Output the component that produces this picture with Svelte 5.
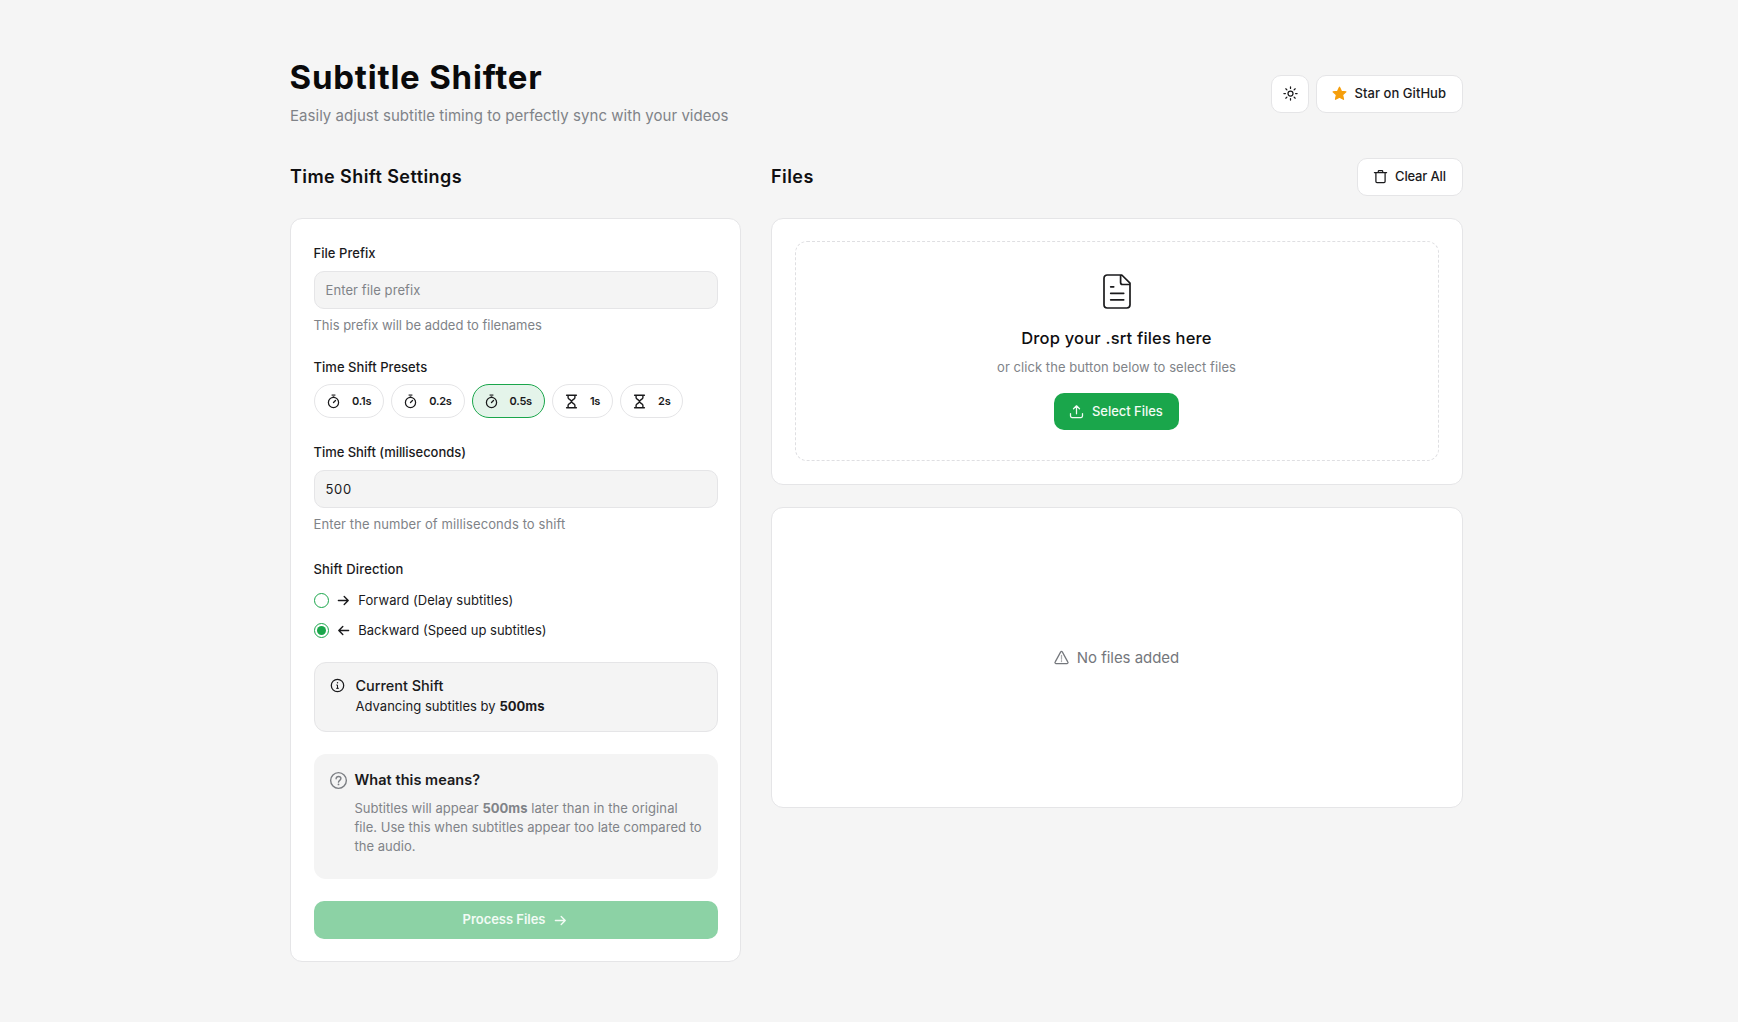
<script>
  let presets = [
    { label: '0.1s', ms: 100, icon: 'stopwatch' },
    { label: '0.2s', ms: 200, icon: 'stopwatch' },
    { label: '0.5s', ms: 500, icon: 'stopwatch' },
    { label: '1s', ms: 1000, icon: 'hourglass' },
    { label: '2s', ms: 2000, icon: 'hourglass' }
  ];
  let shift = $state(500);
  let prefix = $state('');
  let direction = $state('backward');
</script>

{#snippet arrow(back)}
  <svg class="icon arrow" class:back viewBox="0 0 15 15"><path d="M2.4 7.5h9.8M8.2 3.5l4 4-4 4" /></svg>
{/snippet}

<div class="page">
  <header>
    <div>
      <h1>Subtitle Shifter</h1>
      <p class="tagline">Easily adjust subtitle timing to perfectly sync with your videos</p>
    </div>
    <div class="actions">
      <button class="btn square" aria-label="Toggle theme">
        <svg class="icon" viewBox="0 0 15 15"><circle cx="7.5" cy="7.5" r="2.5" /><path d="M7.5.9v1.5M7.5 12.6v1.5M.9 7.5h1.5M12.6 7.5h1.5M2.8 2.8l1.1 1.1M11.1 11.1l1.1 1.1M2.8 12.2l1.1-1.1M11.1 3.9l1.1-1.1" /></svg>
      </button>
      <button class="btn star">
        <svg class="icon gold" viewBox="0 0 15 15"><path d="M7.5 1.2 9.4 5.3l4.5.5-3.3 3 .9 4.5-4-2.2-4 2.2.9-4.5-3.3-3 4.5-.5z" /></svg>
        <span>Star on GitHub</span>
      </button>
    </div>
  </header>

  <main>
    <section class="settings">
      <div class="head"><h2>Time Shift Settings</h2></div>
      <div class="card form">
        <label class="label" for="prefix">File Prefix</label>
        <input id="prefix" placeholder="Enter file prefix" bind:value={prefix} />
        <p class="help">This prefix will be added to filenames</p>

        <div class="label presets-label">Time Shift Presets</div>
        <div class="chips">
          {#each presets as p}
            <button class="chip" class:active={shift === p.ms} onclick={() => (shift = p.ms)}>
              {#if p.icon === 'stopwatch'}
                <svg class="icon" viewBox="0 0 15 15"><circle cx="7.5" cy="8.5" r="5.1" /><path d="M7.5 8.5l2-2" /><path class="crown" d="M5.6 1.2h3.8M7.5 1v2.4" /></svg>
              {:else}
                <svg class="icon glass" viewBox="0 0 15 15"><path d="M2.6 1.3h9.8M2.6 13.7h9.8M4.1 1.5v2.2c0 1.5 3.4 2.4 3.4 3.8s-3.4 2.3-3.4 3.8v2.2M10.9 1.5v2.2c0 1.5-3.4 2.4-3.4 3.8s3.4 2.3 3.4 3.8v2.2" /></svg>
              {/if}
              <span>{p.label}</span>
            </button>
          {/each}
        </div>

        <label class="label ms-label" for="ms">Time Shift (milliseconds)</label>
        <input id="ms" class="ms" bind:value={shift} />
        <p class="help wide">Enter the number of milliseconds to shift</p>

        <div class="label dir-label">Shift Direction</div>
        <button class="radio" onclick={() => (direction = 'forward')}>
          <span class="dot" class:on={direction === 'forward'}></span>
          {@render arrow(false)}
          <span class="fwd">Forward (Delay subtitles)</span>
        </button>
        <button class="radio" onclick={() => (direction = 'backward')}>
          <span class="dot" class:on={direction === 'backward'}></span>
          {@render arrow(true)}
          <span>Backward (Speed up subtitles)</span>
        </button>

        <div class="alert">
          <svg class="icon" viewBox="0 0 15 15"><circle cx="7.5" cy="7.5" r="6.2" /><path class="mark" d="M6.7 7h.8v3.2M6.6 10.3h1.9" /><path class="pip" d="M7.5 4.8h.01" /></svg>
          <div>
            <h3>Current Shift</h3>
            <p>Advancing subtitles by <b>{shift}ms</b></p>
          </div>
        </div>

        <div class="explain">
          <svg class="icon" viewBox="0 0 15 15"><circle cx="7.5" cy="7.5" r="6.2" /><path d="M5.6 6.1c0-1.1.8-1.8 1.9-1.8s1.9.7 1.9 1.7c0 1.4-1.9 1.4-1.9 2.8" /><path class="pip" d="M7.5 10.6h.01" /></svg>
          <div>
            <h3>What this means?</h3>
            <p>Subtitles will appear <b>{shift}ms</b> <span class="loose">later than in the original</span><br />file. Use this when subtitles appear too late compared to<br />the audio.</p>
          </div>
        </div>

        <button class="process" disabled>
          <span>Process Files</span>
          {@render arrow(false)}
        </button>
      </div>
    </section>

    <section class="files">
      <div class="head">
        <h2 class="files-title">Files</h2>
        <button class="btn clear">
          <svg class="icon" viewBox="0 0 15 15"><path d="M1.4 3.6h12.2M5.3 3.4V2.2c0-.4.3-.7.7-.7h3c.4 0 .7.3.7.7v1.2M2.9 3.8v8.7c0 .6.5 1.1 1.1 1.1h7c.6 0 1.1-.5 1.1-1.1V3.8" /></svg>
          <span>Clear All</span>
        </button>
      </div>
      <div class="card drop-card">
        <div class="dropzone">
          <svg class="doc" viewBox="0 0 28 35"><path d="M4.2 1h14.6L27 9.2v21.6a3.2 3.2 0 0 1-3.2 3.2H4.2A3.2 3.2 0 0 1 1 30.8V4.2A3.2 3.2 0 0 1 4.2 1zM17.6 1.3v7.2a2 2 0 0 0 2 2h7M7.7 12.8h3M7.7 19.3h13M7.7 25.8h13" /></svg>
          <h3>Drop your .srt files here</h3>
          <p>or click the button below to select files</p>
          <button class="select">
            <svg class="icon" viewBox="0 0 15 15"><path d="M7.5 9.8V2M4.5 4.8l3-3 3 3M1.5 9.5v2.6c0 .8.6 1.4 1.4 1.4h9.2c.8 0 1.4-.6 1.4-1.4V9.5" /></svg>
            <span>Select Files</span>
          </button>
        </div>
      </div>
      <div class="card empty">
        <svg class="icon" viewBox="0 0 15 15"><path d="M6.7 1.9a.9.9 0 0 1 1.6 0l5.6 10.2a.9.9 0 0 1-.8 1.4H1.9a.9.9 0 0 1-.8-1.4z" /><path class="thin" d="M7.5 5.4v3.8M7.5 10.5v1" /></svg>
        <span>No files added</span>
      </div>
    </section>
  </main>
</div>

<style>
  :global(body) {
    background: #f5f5f5;
  }
  .page {
    box-sizing: border-box;
    width: 1173px;
    height: 1022px;
    margin-left: 290px;
    padding-top: 57px;
    font: 400 13px/18px Inter, sans-serif;
    color: #1a1a1c;
  }
  .page *,
  .page *::before {
    box-sizing: border-box;
  }
  h1, h2, h3, p {
    margin: 0;
  }
  button, input {
    font: inherit;
    color: inherit;
    margin: 0;
  }
  .icon {
    flex: none;
    width: 15px;
    height: 15px;
    fill: none;
    stroke: currentColor;
    stroke-width: 1.25;
    stroke-linecap: round;
    stroke-linejoin: round;
  }
  .arrow,
  .glass {
    stroke-width: 1.4;
  }
  .back {
    transform: scaleX(-1);
  }
  header {
    display: flex;
    justify-content: space-between;
    height: 69px;
  }
  h1 {
    margin-left: -0.5px;
    font-size: 33px;
    line-height: 40px;
    font-weight: 700;
    letter-spacing: 0.79px;
    color: #0a0a0b;
  }
  .tagline {
    margin-top: 9px;
    font-size: 15px;
    line-height: 20px;
    letter-spacing: 0.035px;
    color: #808388;
  }
  .actions {
    display: flex;
    gap: 7px;
    padding-top: 18px;
  }
  .btn {
    display: flex;
    align-items: center;
    height: 38px;
    padding: 0 0 0 15px;
    background: #fff;
    border: 1px solid #e5e5e7;
    border-radius: 10px;
    font-weight: 550;
    white-space: nowrap;
  }
  .btn span {
    padding-bottom: 2px;
  }
  .btn .icon {
    margin-bottom: 1px;
  }
  .square {
    width: 38px;
    padding: 0;
    justify-content: center;
  }
  .star {
    width: 147px;
    gap: 7.5px;
    letter-spacing: 0.05px;
  }
  .gold {
    fill: #f59e0b;
    stroke: #f59e0b;
  }
  .clear {
    width: 106px;
    gap: 7px;
    letter-spacing: -0.15px;
  }
  main {
    display: flex;
    justify-content: space-between;
    padding-top: 32px;
  }
  .settings {
    width: 451px;
  }
  .files {
    width: 692px;
  }
  .head {
    display: flex;
    align-items: center;
    justify-content: space-between;
    height: 38px;
    margin-bottom: 22px;
  }
  h2 {
    font-size: 18px;
    line-height: 24px;
    font-weight: 600;
    letter-spacing: 0.42px;
    color: #0f0f11;
  }
  .files-title {
    letter-spacing: 0.45px;
  }
  .card {
    background: #fff;
    border: 1px solid #e5e5e7;
    border-radius: 12px;
  }
  .form {
    height: 744px;
    padding: 25px 22px 0 23px;
  }
  .label {
    display: block;
    height: 18px;
    margin-left: -0.5px;
    font-weight: 550;
    letter-spacing: 0.04px;
  }
  input {
    display: block;
    width: 100%;
    height: 38px;
    margin-top: 9px;
    padding: 0 10.5px;
    background: #f4f4f4;
    border: 1px solid #e5e5e7;
    border-radius: 10px;
    letter-spacing: 0.09px;
    outline: none;
  }
  input::placeholder {
    color: #808388;
    opacity: 1;
  }
  .ms {
    letter-spacing: 0.7px;
  }
  .help {
    margin-top: 7px;
    margin-left: -0.5px;
    letter-spacing: -0.02px;
    color: #808388;
  }
  .wide {
    letter-spacing: 0.1px;
  }
  .presets-label {
    margin-top: 24px;
  }
  .chips {
    display: flex;
    gap: 7px;
    margin-top: 8px;
  }
  .chip {
    display: flex;
    align-items: center;
    gap: 11px;
    height: 34px;
    padding: 0 12px 0 11px;
    border: 1px solid #e5e5e7;
    border-radius: 17px;
    background: #fff;
    font-size: 11px;
    font-weight: 600;
    letter-spacing: -0.25px;
  }
  .chip.active {
    background: #e4f4ea;
    border-color: #1aa64b;
  }
  .crown {
    opacity: 0.65;
    stroke-width: 1.7;
    stroke-linecap: butt;
  }
  .ms-label {
    margin-top: 25px;
    letter-spacing: -0.04px;
  }
  .dir-label {
    margin-top: 27px;
    margin-bottom: 12px;
    letter-spacing: 0.15px;
  }
  .radio {
    display: flex;
    align-items: center;
    height: 20px;
    margin-bottom: 10px;
    padding: 0;
    border: 0;
    background: none;
  }
  .dot {
    display: grid;
    place-items: center;
    width: 15px;
    height: 15px;
    margin-right: 7px;
    border: 1px solid #1aa64b;
    border-radius: 50%;
  }
  .dot.on::before {
    content: '';
    width: 9px;
    height: 9px;
    border-radius: 50%;
    background: #1aa64b;
  }
  .radio .arrow {
    margin-right: 7.3px;
  }
  .radio span:last-child {
    padding-bottom: 1px;
  }
  .fwd {
    letter-spacing: 0.06px;
  }
  .alert {
    display: flex;
    gap: 10.5px;
    height: 70px;
    margin-top: 22px;
    padding: 14px 0 0 15px;
    background: #f4f4f4;
    border: 1px solid #e5e5e7;
    border-radius: 12px;
  }
  .alert .icon {
    margin-top: 1px;
  }
  .mark {
    stroke-width: 1;
  }
  .alert h3 {
    font-size: 14.5px;
    line-height: 18px;
    font-weight: 500;
    letter-spacing: -0.03px;
  }
  .alert p {
    margin-top: 2px;
    letter-spacing: 0.03px;
  }
  .pip {
    stroke-width: 1.4;
  }
  .explain {
    display: flex;
    gap: 6.5px;
    height: 125px;
    margin-top: 22px;
    padding: 17px 0 0 15px;
    background: #f4f4f4;
    border-radius: 12px;
  }
  .explain .icon {
    width: 19px;
    height: 19px;
    color: #7b7e83;
    stroke-width: 1.1;
  }
  .explain h3 {
    font-size: 14.5px;
    line-height: 18px;
    font-weight: 600;
    letter-spacing: 0.04px;
  }
  .explain p {
    margin-top: 10px;
    line-height: 19px;
    letter-spacing: 0.022px;
    color: #808388;
    white-space: nowrap;
  }
  .loose {
    letter-spacing: 0.09px;
  }
  .process {
    display: flex;
    align-items: center;
    justify-content: center;
    gap: 8px;
    width: 100%;
    height: 38px;
    margin-top: 22px;
    padding: 0 1px 0 0;
    border: 0;
    border-radius: 10px;
    background: #8cd2a5;
    color: #f2fbf5;
    font-weight: 600;
    letter-spacing: -0.036px;
  }
  .process span {
    padding-bottom: 2px;
  }
  .drop-card {
    height: 267px;
    padding: 22px 23px 0;
  }
  .dropzone {
    display: flex;
    flex-direction: column;
    align-items: center;
    height: 220px;
    padding: 32px 1px 0 0;
    border: 1px dashed #dfdfe2;
    border-radius: 12px;
  }
  .doc {
    width: 28px;
    height: 35px;
    fill: none;
    stroke: #1a1a1c;
    stroke-width: 1.7;
    stroke-linecap: round;
    stroke-linejoin: round;
  }
  .dropzone h3 {
    margin-top: 19px;
    font-size: 16.5px;
    line-height: 20px;
    font-weight: 500;
    letter-spacing: 0.18px;
    color: #0f0f11;
  }
  .dropzone p {
    margin-top: 10px;
    letter-spacing: 0.06px;
    color: #808388;
  }
  .select {
    display: flex;
    align-items: center;
    gap: 8px;
    height: 37px;
    width: 125px;
    margin-top: 17px;
    padding: 0 0 0 15px;
    border: 0;
    border-radius: 10px;
    background: #1aa64b;
    color: #f2fbf5;
    font-weight: 550;
    letter-spacing: -0.04px;
  }
  .select span {
    padding-bottom: 1px;
  }
  .empty {
    display: flex;
    align-items: center;
    justify-content: center;
    gap: 8px;
    height: 301px;
    margin-top: 22px;
    padding-right: 1px;
    font-size: 15px;
    letter-spacing: -0.035px;
    color: #74777c;
  }
  .thin {
    opacity: 0.6;
  }
</style>
